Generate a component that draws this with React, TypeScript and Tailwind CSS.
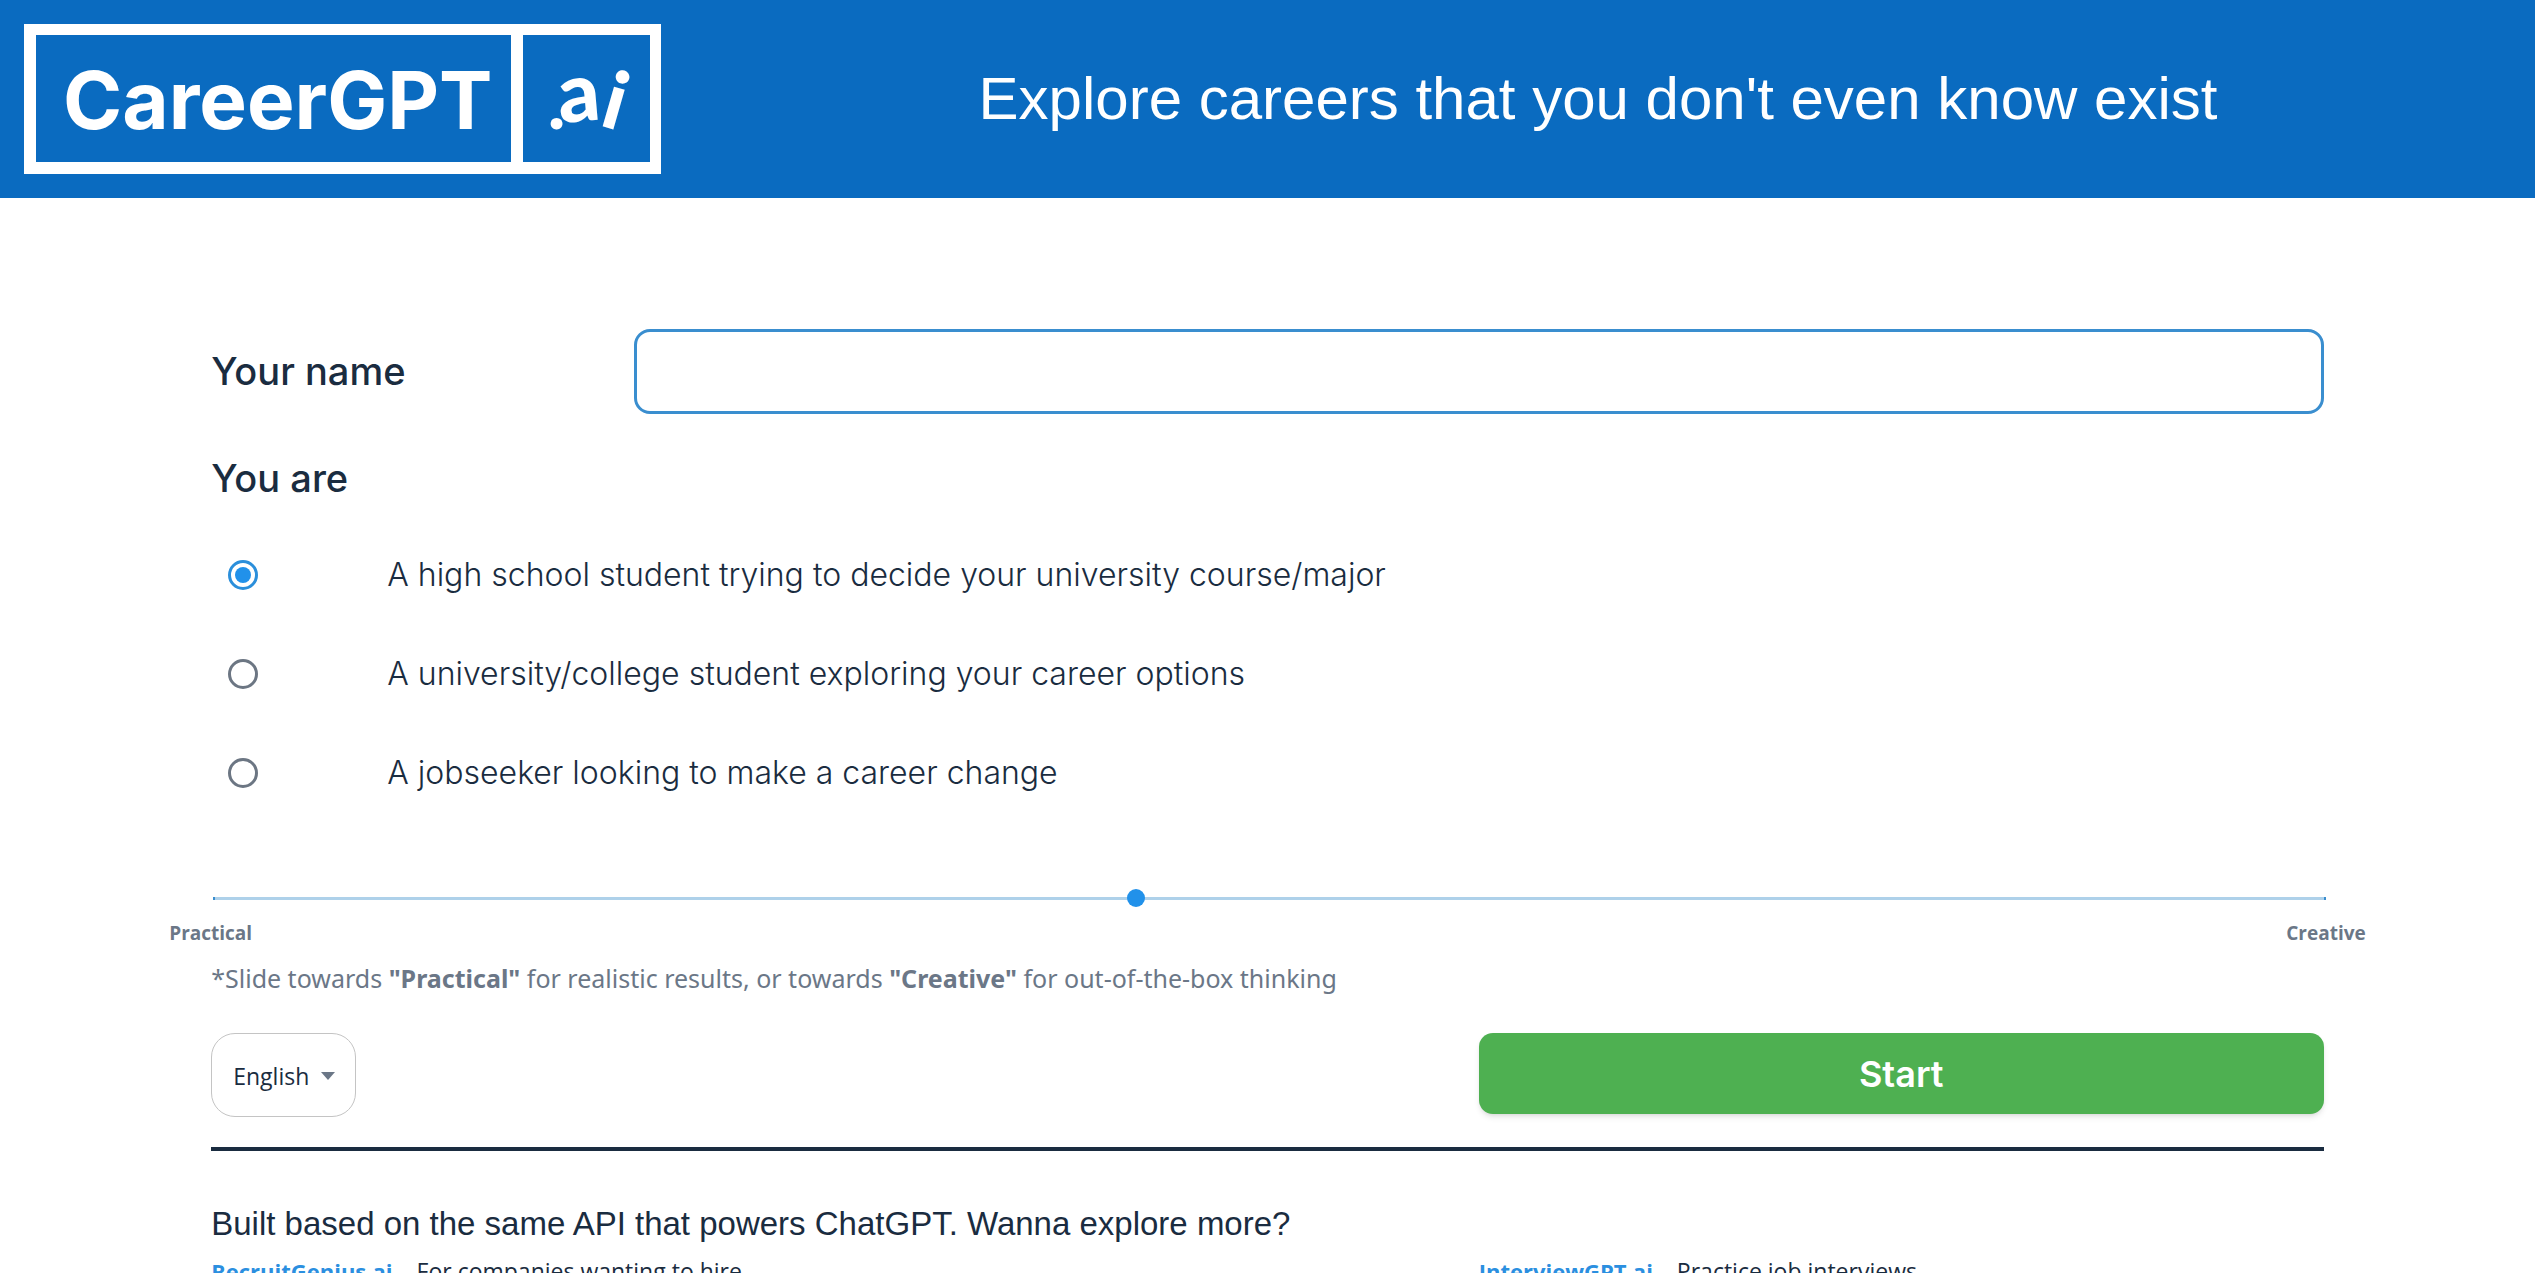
import React, { useState } from 'react';

interface CareerStage {
  value: string;
  label: string;
}

interface ProductLinkProps {
  name: string;
  href: string;
  description: string;
}

const stages: CareerStage[] = [
  { value: 'school', label: 'A high school student trying to decide your university course/major' },
  { value: 'college', label: 'A university/college student exploring your career options' },
  { value: 'jobseeker', label: 'A jobseeker looking to make a career change' },
];

const languages = ['English', 'Español', 'Français', 'Deutsch'];

const Logo: React.FC = () => (
  <svg
    viewBox="0 0 637 150"
    className="h-[150px] w-[637px] shrink-0 font-['Lato',sans-serif] font-black"
    fill="#fff"
    role="img"
    aria-label="CareerGPT.ai"
  >
    <path fillRule="evenodd" d="M0 0H637V150H0ZM12 11V138H487V11ZM499 11V138H626V11Z" />
    <text x="39" y="105" fontSize="80" className="font-['Inter',sans-serif] font-bold">
      CareerGPT
    </text>
    <text x="524" y="105" fontSize="72">.</text>
    <text transform="translate(536 99) rotate(-5)" fontSize="82">a</text>
    <text transform="translate(574 101) rotate(16)" fontSize="80">i</text>
  </svg>
);

const ProductLink: React.FC<ProductLinkProps> = ({ name, href, description }) => (
  <p className="flex flex-1 items-baseline gap-6 text-[23px] leading-9">
    <a href={href} className="text-[22px] font-bold text-[#2b8fe0]">
      {name}
    </a>
    <span>{description}</span>
  </p>
);

const App: React.FC = () => {
  const [name, setName] = useState('');
  const [stage, setStage] = useState('school');
  const [creativity, setCreativity] = useState(43.6);
  const [language, setLanguage] = useState('English');

  return (
    <div className="h-screen overflow-hidden bg-white font-['Open_Sans',sans-serif] text-[#1a2c40]">
      {/* Header */}
      <header className="flex items-center bg-[#0a6bc0] p-6">
        <Logo />
        <h1 className="flex-1 pl-6 text-center font-['Liberation_Sans',sans-serif] text-[60px] leading-none text-white">
          Explore careers that you don't even know exist
        </h1>
      </header>

      <main className="px-[8.333%] pt-[131px]">
        <form onSubmit={(e) => e.preventDefault()}>
          {/* Name */}
          <div className="flex items-center">
            <label htmlFor="name" className="w-1/5 font-['Inter',sans-serif] text-[38px] font-medium">
              Your name
            </label>
            <input
              id="name"
              type="text"
              value={name}
              onChange={(e) => setName(e.target.value)}
              className="h-[85px] flex-1 rounded-2xl border-3 border-[#3a8ecf] px-6 text-3xl outline-none"
            />
          </div>

          {/* Career stage */}
          <fieldset className="mt-10">
            <legend className="font-['Inter',sans-serif] text-[38px] leading-[48px] font-medium">You are</legend>
            <div className="mt-[23px]">
              {stages.map((item) => (
                <label key={item.value} className="flex h-[99px] items-center pl-[17px]">
                  <input
                    type="radio"
                    name="stage"
                    value={item.value}
                    checked={stage === item.value}
                    onChange={() => setStage(item.value)}
                    className="size-[30px] appearance-none rounded-full border-3 border-[#6c7683] bg-clip-content p-1 checked:border-[#2b8fdb] checked:bg-[#2191ea]"
                  />
                  <span className="pl-[129px] font-['Inter',sans-serif] text-[32px] font-light">{item.label}</span>
                </label>
              ))}
            </div>
          </fieldset>

          {/* Creativity slider */}
          <div className="mt-[67px]">
            <input
              type="range"
              min={0}
              max={100}
              step={0.1}
              value={creativity}
              aria-label="Practical to creative"
              onChange={(e) => setCreativity(Number(e.target.value))}
              className="ml-0.5 block h-[18px] w-full appearance-none bg-transparent [&::-webkit-slider-runnable-track]:h-[3px] [&::-webkit-slider-runnable-track]:border-x-2 [&::-webkit-slider-runnable-track]:border-[#3a8ecf] [&::-webkit-slider-runnable-track]:bg-[#aed1ea] [&::-webkit-slider-thumb]:-mt-2 [&::-webkit-slider-thumb]:size-[18px] [&::-webkit-slider-thumb]:appearance-none [&::-webkit-slider-thumb]:rounded-full [&::-webkit-slider-thumb]:bg-[#2191ea]"
            />
            <div className="-mx-[42px] mt-3 flex justify-between text-[19px] leading-7 font-bold text-[#6b7787]">
              <span>Practical</span>
              <span>Creative</span>
            </div>
          </div>
          <p className="mt-[13px] font-['Noto_Sans',sans-serif] text-[25px] leading-9 text-[#6b7787]">
            *Slide towards <b>"Practical"</b> for realistic results, or towards <b>"Creative"</b> for out-of-the-box
            thinking
          </p>

          {/* Language and submit */}
          <div className="mt-[37px] flex items-start justify-between">
            <div className="relative">
              <select
                aria-label="Language"
                value={language}
                onChange={(e) => setLanguage(e.target.value)}
                className="h-[84px] w-[145px] appearance-none rounded-3xl border border-[#c4c4c4] bg-white pt-0.5 pl-[21px] text-[23px]"
              >
                {languages.map((item) => (
                  <option key={item}>{item}</option>
                ))}
              </select>
              <svg viewBox="0 0 14 8" className="pointer-events-none absolute top-[39px] right-[21px] h-2 w-3.5" fill="#6b7787">
                <path d="M0 0H14L7 8Z" />
              </svg>
            </div>
            <button
              type="submit"
              className="h-[81px] w-2/5 rounded-[14px] bg-[#4eb051] font-['Inter',sans-serif] text-4xl font-semibold text-white shadow-md"
            >
              Start
            </button>
          </div>
        </form>

        <hr className="mt-[30px] border-t-4 border-[#1a2c40]" />

        {/* Related products */}
        <section className="pt-12">
          <h2 className="font-['Liberation_Sans',sans-serif] text-[33px] leading-[50px]">
            Built based on the same API that powers ChatGPT. Wanna explore more?
          </h2>
          <div className="mt-1 grid grid-cols-[3fr_2fr]">
            <ProductLink name="RecruitGenius.ai" href="#recruit" description="For companies wanting to hire" />
            <ProductLink name="InterviewGPT.ai" href="#interview" description="Practice job interviews" />
          </div>
        </section>
      </main>
    </div>
  );
};

export default App;
